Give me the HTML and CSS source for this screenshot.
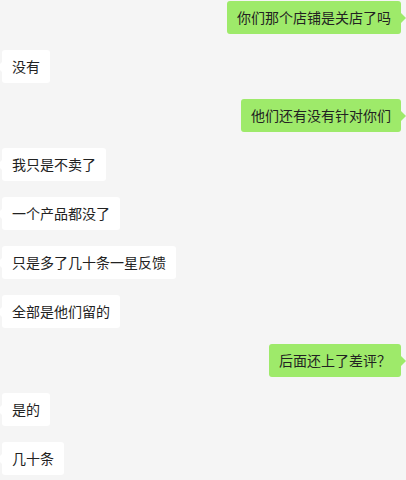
FILE: index.html
```html
<!DOCTYPE html>
<html lang="zh-CN">
<head>
    <meta charset="UTF-8">
    <meta name="viewport" content="width=device-width, initial-scale=1.0">
    <title>聊天记录</title>
    <link rel="stylesheet" href="styles.css">
</head>
<body>

    <!-- 聊天记录 -->
    <div class="chat">
        <div class="msg me"><div class="bubble">你们那个店铺是关店了吗</div></div>
        <div class="msg other"><div class="bubble">没有</div></div>
        <div class="msg me"><div class="bubble">他们还有没有针对你们</div></div>
        <div class="msg other"><div class="bubble">我只是不卖了</div></div>
        <div class="msg other"><div class="bubble">一个产品都没了</div></div>
        <div class="msg other"><div class="bubble">只是多了几十条一星反馈</div></div>
        <div class="msg other"><div class="bubble">全部是他们留的</div></div>
        <div class="msg me"><div class="bubble">后面还上了差评？</div></div>
        <div class="msg other"><div class="bubble">是的</div></div>
        <div class="msg other"><div class="bubble">几十条</div></div>
    </div>

</body>
</html>
```

FILE: styles.css
```css
body {
    margin: 0;
    background-color: #f5f5f5;
    font-family: "Noto Sans CJK SC", "Noto Sans", sans-serif;
    font-size: 14px;
    color: #222;
}
.chat {
    display: flex;
    flex-direction: column;
    gap: 16px;
    padding: 1px 5px 0 2px;
}
.msg {
    display: flex;
}
.msg.me {
    justify-content: flex-end;
}
.bubble {
    position: relative;
    padding: 7px 10px;
    line-height: 19px;
    border-radius: 3px;
    background-color: #fff;
    white-space: nowrap;
}
.me .bubble {
    background-color: #9eea6a;
}
.bubble::after {
    content: "";
    position: absolute;
    top: 12px;
    border-top: 5px solid transparent;
    border-bottom: 5px solid transparent;
}
.me .bubble::after {
    right: -5px;
    border-left: 5px solid #9eea6a;
}
.other .bubble::after {
    left: -5px;
    border-right: 5px solid #fff;
}
```
